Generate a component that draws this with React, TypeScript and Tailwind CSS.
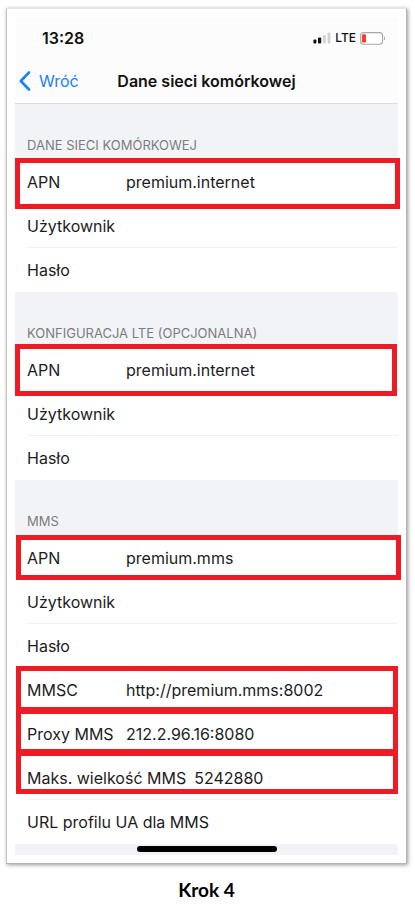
interface Field {
  id: string;
  label: string;
  value?: string;
  // wide labels push the value right instead of using the shared column
  wide?: boolean;
  highlight?: string;
}

interface Section {
  title: string;
  fields: Field[];
}

const sections: Section[] = [
  {
    title: 'DANE SIECI KOMÓRKOWEJ',
    fields: [
      { id: 'data-apn', label: 'APN', value: 'premium.internet', highlight: '-top-[2px] -bottom-[5px] left-0 -right-[2px]' },
      { id: 'data-user', label: 'Użytkownik' },
      { id: 'data-pass', label: 'Hasło' },
    ],
  },
  {
    title: 'KONFIGURACJA LTE (OPCJONALNA)',
    fields: [
      { id: 'lte-apn', label: 'APN', value: 'premium.internet', highlight: '-top-[4px] -bottom-[4px] left-0 right-px' },
      { id: 'lte-user', label: 'Użytkownik' },
      { id: 'lte-pass', label: 'Hasło' },
    ],
  },
  {
    title: 'MMS',
    fields: [
      { id: 'mms-apn', label: 'APN', value: 'premium.mms', highlight: '-top-px bottom-0 left-px -right-[3px]' },
      { id: 'mms-user', label: 'Użytkownik' },
      { id: 'mms-pass', label: 'Hasło' },
      { id: 'mms-mmsc', label: 'MMSC', value: 'http://premium.mms:8002', highlight: '-top-[2px] -bottom-[2px] left-px right-0' },
      { id: 'mms-proxy', label: 'Proxy MMS', value: '212.2.96.16:8080', highlight: '-top-[5px] bottom-0 left-px right-0' },
      { id: 'mms-size', label: 'Maks. wielkość MMS', value: '5242880', wide: true, highlight: '-top-[7px] bottom-[6px] left-px right-0' },
      { id: 'mms-ua', label: 'URL profilu UA dla MMS', wide: true },
    ],
  },
];

function StatusBar() {
  return (
    <div className="flex h-10 items-center justify-between pl-[27px] pr-3">
      <span className="text-base font-semibold">13:28</span>
      <div className="flex items-center gap-1">
        <svg width="18" height="12" viewBox="0 0 18 12" aria-hidden="true">
          <rect x="0.4" y="7.5" width="3" height="4" rx="1" fill="#111" />
          <rect x="5" y="5.5" width="3.2" height="6" rx="1" fill="#111" />
          <rect x="10" y="3" width="2.8" height="8.5" rx="1" fill="#d2d2d4" />
          <rect x="14.6" y="0.5" width="2.8" height="11" rx="1" fill="#d2d2d4" />
        </svg>
        <span className="text-xs font-medium">LTE</span>
        <svg width="26" height="13" viewBox="0 0 26 13" aria-hidden="true">
          <rect x="0.6" y="0.6" width="22" height="11.6" rx="3" fill="#fff" stroke="#a9a9ab" strokeWidth="1.1" />
          <rect x="2" y="2.2" width="4" height="8.4" rx="1.2" fill="#fb3b30" />
          <path d="M24 4.4c1.4.5 1.4 3.3 0 3.8z" fill="#a0a0a2" />
        </svg>
      </div>
    </div>
  );
}

function FieldRow({ field, last }: { field: Field; last: boolean }) {
  return (
    <div className="relative flex h-11 items-center bg-white pb-px pl-3">
      <label htmlFor={field.id} className={field.wide ? 'mr-2 shrink-0' : 'w-[99px] shrink-0'}>
        {field.label}
      </label>
      <input
        id={field.id}
        type="text"
        defaultValue={field.value}
        className="min-w-0 flex-1 bg-transparent pt-px outline-none"
      />
      {!last && <span className="absolute bottom-0 left-3 right-0 h-px bg-[#f1f1f2]" />}
      {field.highlight && (
        <span className={`pointer-events-none absolute z-10 border-5 border-[#ed1c24] ${field.highlight}`} />
      )}
    </div>
  );
}

export default function App() {
  return (
    <main className="min-h-screen bg-white pl-[6px] pr-2 pt-2 font-['Inter',sans-serif] text-[#1c1c1e]">
      <div className="border border-[#e6e6e6] border-b-[#b4b4b4] border-l-[#c4c4c4] border-r-[#b4b4b4] bg-white px-2 pb-2 pt-[9px] shadow-[1px_1px_4px_rgba(0,0,0,0.4)]">
        <div className="bg-[#f2f3f7]">
          <header className="border-b border-[#dcdce0] bg-[#fcfcfc] text-[#111]">
            <StatusBar />
            <div className="grid h-[45px] grid-cols-[1fr_auto_1fr] items-center pl-1 pr-1 pt-px">
              <button type="button" className="flex items-center gap-2 text-[#1a82f7]">
                <svg width="12" height="20" viewBox="0 0 12 20" fill="none" aria-hidden="true">
                  <path d="M10 1.5L1.8 10l8.2 8.5" stroke="currentColor" strokeWidth="2.6" strokeLinecap="round" strokeLinejoin="round" />
                </svg>
                <span className="text-base">Wróć</span>
              </button>
              <h1 className="whitespace-nowrap text-base font-semibold">Dane sieci komórkowej</h1>
            </div>
          </header>

          {sections.map((section) => (
            <section key={section.title} className="text-base">
              <h2 className="flex h-14 items-end pb-[6px] pl-3 text-[13px] leading-[18px] text-[#7c7c80]">
                {section.title}
              </h2>
              {section.fields.map((field, i) => (
                <FieldRow key={field.id} field={field} last={i === section.fields.length - 1} />
              ))}
            </section>
          ))}

          {/* Home indicator */}
          <div className="flex h-[11px] justify-center pt-[2px]">
            <span className="h-[6px] w-[140px] rounded-full bg-black" />
          </div>
        </div>
      </div>
      <p className="pt-3 text-center font-['Lato',sans-serif] text-[19px] leading-7 font-bold text-black">Krok 4</p>
    </main>
  );
}
